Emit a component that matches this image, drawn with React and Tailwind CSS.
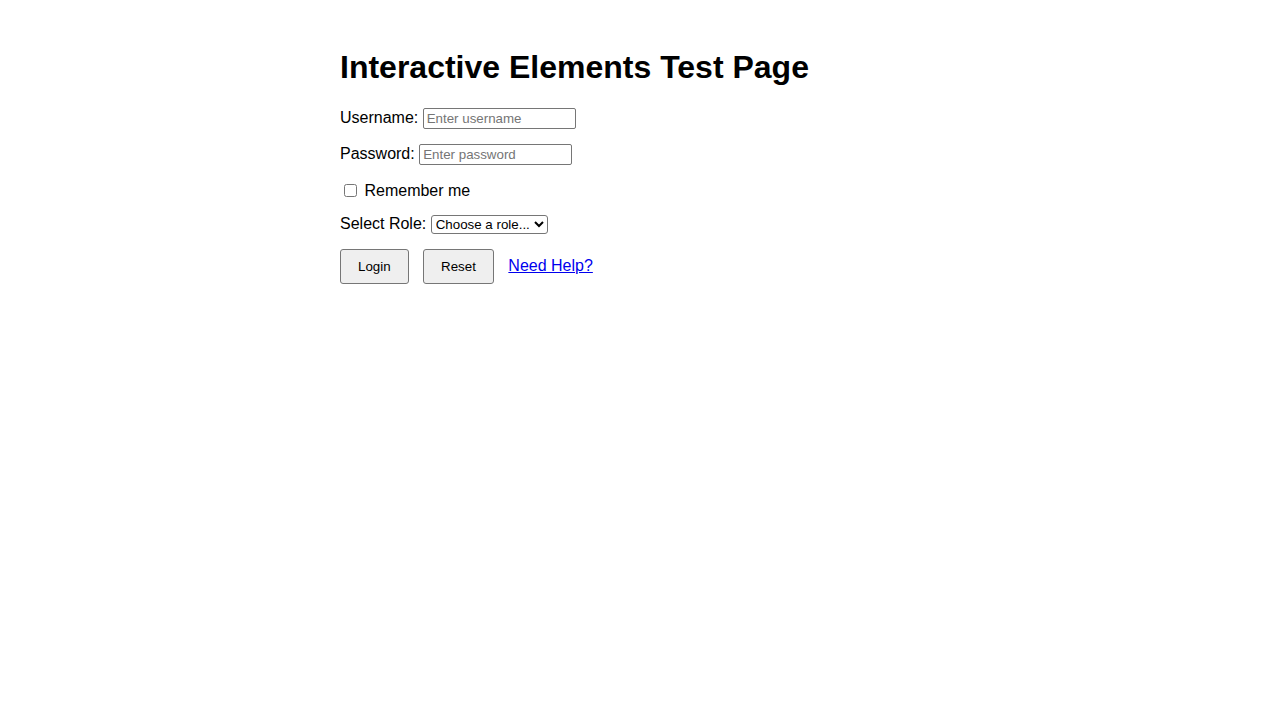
export default function App() {
  return (
    <div className="min-h-screen bg-white p-[28px] text-black font-['Liberation_Sans',Arial,sans-serif] text-[16px] leading-[normal]">
      <div className="mx-auto max-w-[600px]">
        <h1 className="my-[21.44px] text-[32px] font-bold leading-[37px]">Interactive Elements Test Page</h1>

        <div className="mb-[15px]">
          Username:{' '}
          <input
            type="text"
            placeholder="Enter username"
            className="h-[21px] w-[153px] rounded-[2px] border border-[#767676] bg-white px-[3px] py-[2px] text-[13.333px] placeholder:text-[#757575] align-baseline"
          />
        </div>

        <div className="mb-[15px]">
          Password:{' '}
          <input
            type="password"
            placeholder="Enter password"
            className="h-[21px] w-[153px] rounded-[2px] border border-[#767676] bg-white px-[3px] py-[2px] text-[13.333px] placeholder:text-[#757575] align-baseline"
          />
        </div>

        <div className="mb-[15px] pt-[1px]">
          <label>
            <input type="checkbox" className="m-[3px_3px_3px_4px] h-[13px] w-[13px] align-[-1px]" /> Remember me
          </label>
        </div>

        <div className="mb-[15px]">
          Select Role:{' '}
          <select className="h-[19px] w-[117px] rounded-[3px] border border-[#767676] bg-white text-[13.333px]">
            <option>Choose a role...</option>
            <option>Admin</option>
            <option>User</option>
            <option>Guest</option>
          </select>
        </div>

        <div>
          <button className="mr-[10px] rounded-[3px] border border-[#767676] bg-[#efefef] px-[17px] py-[9px] text-[13.333px] leading-[15px]">
            Login
          </button>{' '}
          <button className="mr-[10px] rounded-[3px] border border-[#767676] bg-[#efefef] px-[17px] py-[9px] text-[13.333px] leading-[15px]">
            Reset
          </button>{' '}
          <a href="#" className="text-[#0000ee] underline">
            Need Help?
          </a>
        </div>
      </div>
    </div>
  );
}
